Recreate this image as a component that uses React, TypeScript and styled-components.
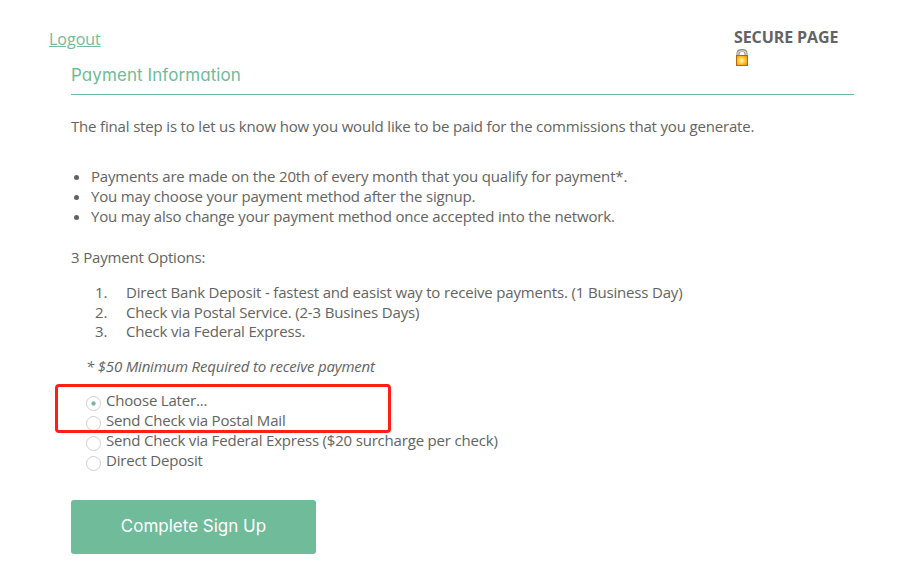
import React, { useState } from "react";
import styled, { createGlobalStyle } from "styled-components";

const green = "#6fbb9a";

const GlobalStyle = createGlobalStyle`
  * { box-sizing: border-box; }
  body {
    margin: 0;
    background: #fff;
    color: #636363;
    font: 15px/20px "Open Sans", sans-serif;
  }
`;

const Page = styled.main`
  position: relative;
  width: 900px;
  height: 573px;
  overflow: hidden;
  padding: 27px 46px 0 49px;
`;

const TopBar = styled.header`
  display: flex;
  justify-content: space-between;
  height: 38px;
`;

const Logout = styled.a`
  height: 24px;
  color: ${green};
  font-size: 16px;
  line-height: 24px;
  text-decoration: underline;
`;

const Secure = styled.div`
  display: flex;
  flex-direction: column;
  width: 120px;
  font-size: 16px;
  font-weight: 700;
  line-height: 20px;
  letter-spacing: -0.1px;
  white-space: nowrap;

  svg { margin: 2px 0 0 1px; flex: none; }
`;

const Content = styled.section`
  margin-left: 22px;
  letter-spacing: -0.17px;
`;

const Heading = styled.h1`
  height: 30px;
  margin: 0;
  border-bottom: 1px solid ${green};
  color: ${green};
  font: 400 17px/20px Inter, sans-serif;
  font-feature-settings: "cv11";
  letter-spacing: 0.08px;
`;

const Paragraph = styled.p<{ $top: number }>`
  margin: ${(p) => p.$top}px 0 0;
`;

const Bullets = styled.ul`
  margin: 30px 0 0;
  padding-left: 20px;
`;

const Steps = styled.ol`
  display: grid;
  gap: 0;
  margin: 15px 0 0;
  padding: 0 0 0 24px;
  list-style: none;
  counter-reset: step;
`;

const Step = styled.li`
  display: flex;
  height: 19.6px;
  counter-increment: step;

  &::before {
    content: counter(step) ".";
    width: 31px;
  }
`;

const Note = styled.p`
  margin: 15px 0 0 15px;
  font-style: italic;
  letter-spacing: -0.19px;
`;

const Options = styled.div`
  margin: 14px 0 0 15px;
  letter-spacing: -0.19px;
`;

const Option = styled.label`
  display: flex;
  height: 20px;
  gap: 5px;
`;

const Radio = styled.input`
  appearance: none;
  flex: none;
  width: 15px;
  height: 15px;
  margin: 6px 0 0;
  border: 1px solid #d0d0d0;
  border-radius: 50%;
  background: #fff;

  &:checked {
    background: radial-gradient(circle, ${green} 1.7px, #fff 2.5px);
  }
`;

const Highlight = styled.div`
  position: absolute;
  left: 55px;
  top: 384px;
  width: 336px;
  height: 49px;
  border: 3px solid #ff2015;
  border-radius: 4px;
  pointer-events: none;
`;

const Submit = styled.button`
  display: block;
  width: 245px;
  height: 54px;
  margin: 30px 0 0;
  padding: 0 0 2px;
  border: 0;
  border-radius: 3px;
  background: ${green};
  color: #fff;
  font: 400 17px Inter, sans-serif;
  letter-spacing: 0;
`;

function Lock() {
  return (
    <svg width="14" height="18" viewBox="0 0 14 18">
      <defs>
        <radialGradient id="brass" cx="45%" cy="50%" r="65%">
          <stop offset="0" stopColor="#fff8c8" />
          <stop offset="0.4" stopColor="#ffd24a" />
          <stop offset="1" stopColor="#f58a00" />
        </radialGradient>
      </defs>
      <path d="M3 8V4.5C3 .6 11 .6 11 4.5V8" fill="none" stroke="#858b7c" strokeWidth="3" />
      <path d="M3 8V4.5C3 .9 11 .9 11 4.5V8" fill="none" stroke="#dce0d8" strokeWidth="1.2" />
      <rect x="1.5" y="6.5" width="11" height="10" fill="url(#brass)" stroke="#b06a08" />
    </svg>
  );
}

const bullets = [
  "Payments are made on the 20th of every month that you qualify for payment*.",
  "You may choose your payment method after the signup.",
  "You may also change your payment method once accepted into the network.",
];

const steps = [
  "Direct Bank Deposit - fastest and easist way to receive payments. (1 Business Day)",
  "Check via Postal Service. (2-3 Busines Days)",
  "Check via Federal Express.",
];

const options = [
  "Choose Later...",
  "Send Check via Postal Mail",
  "Send Check via Federal Express ($20 surcharge per check)",
  "Direct Deposit",
];

export default function App() {
  const [selected, setSelected] = useState(0);
  return (
    <>
      <GlobalStyle />
      <Page>
        <TopBar>
          <Logout href="#">Logout</Logout>
          <Secure>
            SECURE PAGE
            <Lock />
          </Secure>
        </TopBar>
        <Content>
          <Heading>Payment Information</Heading>
          <Paragraph $top={21}>
            The final step is to let us know how you would like to be paid for the commissions that you generate.
          </Paragraph>
          <Bullets>
            {bullets.map((text) => <li key={text}>{text}</li>)}
          </Bullets>
          <Paragraph $top={21}>3 Payment Options:</Paragraph>
          <Steps>
            {steps.map((text) => <Step key={text}>{text}</Step>)}
          </Steps>
          <Note>* $50 Minimum Required to receive payment</Note>
          <Options>
            {options.map((text, i) => (
              <Option key={text}>
                <Radio type="radio" name="method" checked={selected === i} onChange={() => setSelected(i)} />
                {text}
              </Option>
            ))}
          </Options>
          <Submit type="button">Complete Sign Up</Submit>
        </Content>
        <Highlight />
      </Page>
    </>
  );
}
